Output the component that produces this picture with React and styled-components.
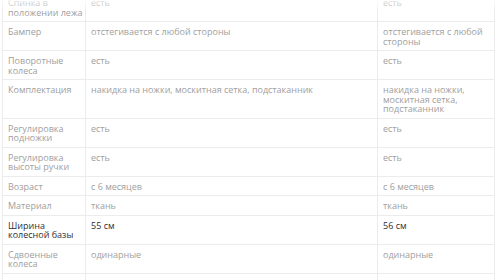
import React from "react";
import styled, { createGlobalStyle } from "styled-components";

const Global = createGlobalStyle`
  html, body { margin: 0; padding: 0; background: #fff; overflow: hidden; }
  body { font-family: "Open Sans", "Liberation Sans", sans-serif; }
`;

const Page = styled.div`
  position: relative;
  width: 500px;
  height: 280px;
  overflow: hidden;
  padding: 0 6px 0 2px;
  box-sizing: border-box;
`;

const Fade = styled.div`
  position: absolute;
  left: 0;
  right: 0;
  top: 0;
  height: 12px;
  background: linear-gradient(to bottom, rgba(255,255,255,0.75), rgba(255,255,255,0));
  pointer-events: none;
`;

const Table = styled.table`
  margin-top: -8px;
  width: 492px;
  border-collapse: collapse;
  table-layout: fixed;
`;

const Cell = styled.td`
  border: 1px solid #ececec;
  padding: 5px 2px 4px 5px;
  vertical-align: top;
  font-size: 9px;
  line-height: 9.5px;
  color: ${(p) => (p.$strong ? "#2f2f35" : "#a0a0a0")};
`;

const rows = [
  ["Спинка в положении лежа", "есть", "есть"],
  ["Бампер", "отстегивается с любой стороны", "отстегивается с любой стороны"],
  ["Поворотные колеса", "есть", "есть"],
  ["Комплектация", "накидка на ножки, москитная сетка, подстаканник", "накидка на ножки, москитная сетка, подстаканник"],
  ["Регулировка подножки", "есть", "есть"],
  ["Регулировка высоты ручки", "есть", "есть"],
  ["Возраст", "с 6 месяцев", "с 6 месяцев"],
  ["Материал", "ткань", "ткань"],
  ["Ширина колесной базы", "55 см", "56 см", true],
  ["Сдвоенные колеса", "одинарные", "одинарные"],
  ["Вес", "7 кг", "7 кг"],
];

export default function App() {
  return (
    <>
      <Global />
      <Page>
        <Table>
          <colgroup>
            <col style={{ width: 83 }} />
            <col style={{ width: 292 }} />
            <col style={{ width: 117 }} />
          </colgroup>
          <tbody>
            {rows.map(([a, b, c, strong]) => (
              <tr key={a}>
                <Cell $strong={strong}>{a}</Cell>
                <Cell $strong={strong}>{b}</Cell>
                <Cell $strong={strong}>{c}</Cell>
              </tr>
            ))}
          </tbody>
        </Table>
        <Fade />
      </Page>
    </>
  );
}
